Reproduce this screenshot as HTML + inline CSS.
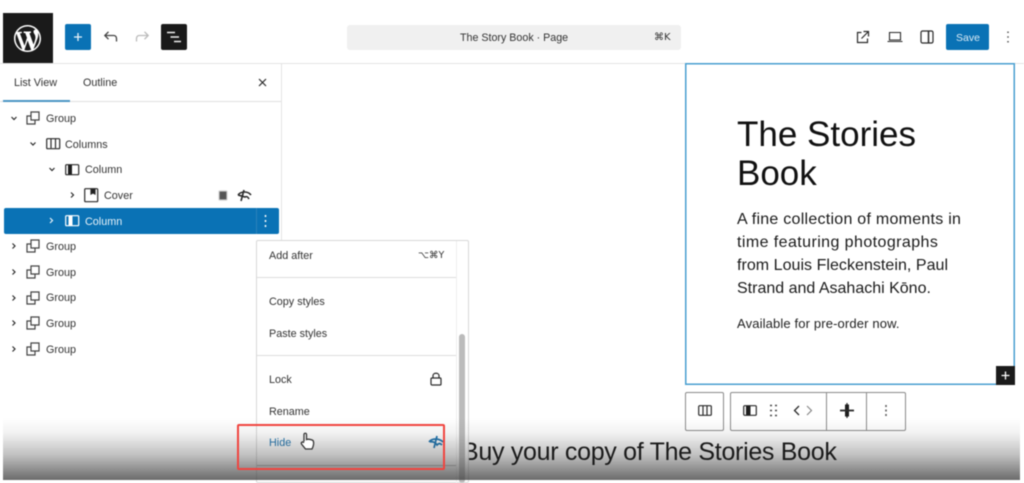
<!DOCTYPE html>
<html>
<head>
<meta charset="utf-8">
<style>
html,body{margin:0;padding:0;background:#fff}
#p{position:relative;width:1024px;height:483px;overflow:hidden;background:#fff;font-family:"Liberation Sans",sans-serif;color:#1e1e1e;filter:blur(.5px)}
.a{position:absolute}
.t{position:absolute;font-size:10.8px;line-height:14px;white-space:nowrap;color:#333;letter-spacing:0}
svg{position:absolute;overflow:visible;fill:none;stroke:#2a2a2a;stroke-width:1.2}
.h{position:absolute;font-size:35px;line-height:39px;color:#111;white-space:nowrap}
.b{position:absolute;font-size:16px;line-height:23px;color:#1a1a1a;white-space:nowrap}
</style>
</head>
<body>
<div id="p">
<!-- top bar -->
<div class="a" style="left:3px;top:13px;width:50px;height:50px;background:#1a1a1a"></div>
<svg style="left:13.500px;top:24.500px;fill:#fff;stroke:none" width="27" height="27" viewBox="0 0 20 20"><path d="M20 10c0-5.51-4.49-10-10-10C4.48 0 0 4.49 0 10c0 5.52 4.48 10 10 10 5.510 0 10-4.480 10-10zM7.780 15.370L4.370 6.220c.55-.02 1.170-.08 1.170-.08.5-.06.44-1.130-.06-1.110 0 0-1.450.11-2.370.11-.18 0-.37 0-.58-.01C4.120 2.690 6.870 1.070 10 1.070c2.330 0 4.450.87 6.030 2.340-.66-.110-1.600.380-1.600 1.540 0 .72.430 1.330.89 2.060.350.610.550 1.360.550 2.460 0 1.490-1.400 5-1.400 5l-3.030-8.370c.540-.020.820-.170.820-.170.500-.050.440-1.250-.060-1.220 0 0-1.440.120-2.380.120-.870 0-2.330-.120-2.330-.120-.500-.030-.560 1.200-.060 1.220l.920.080 1.260 3.410zM17.410 10c.240-.640.740-1.870.430-4.250.700 1.290 1.050 2.710 1.050 4.250 0 3.290-1.730 6.240-4.400 7.780.970-2.590 1.940-5.200 2.920-7.780zM6.100 18.090C3.120 16.650 1.110 13.530 1.110 10c0-1.300.230-2.480.720-3.590C3.250 10.300 4.670 14.200 6.100 18.090zm4.030-6.630l2.580 6.980c-.860.290-1.740.450-2.710.450-.790 0-1.570-.110-2.290-.330.810-2.380 1.620-4.740 2.420-7.100z"/></svg>
<div class="a" style="left:65px;top:24px;width:26px;height:26px;background:#0a72b5;border-radius:2px"></div>
<svg style="left:71px;top:30px" width="14" height="14"><path d="M7 3V11M3 7H11" stroke="#e8f2f9" stroke-width="1.300"/></svg>
<svg style="left:103px;top:30px" width="15" height="14"><path d="M13.500 11.500V8.500C13.500 6.800 12.300 5.500 10.800 5.500H2M5.500 1.800L1.800 5.500L5.500 9.200" stroke-width="1.300" stroke="#444"/></svg>
<svg style="left:135px;top:30px" width="15" height="14"><path d="M1.500 11.500V8.500C1.500 6.800 2.700 5.500 4.200 5.500H13M9.500 1.800L13.200 5.500L9.500 9.200" stroke="#bbb" stroke-width="1.300"/></svg>
<div class="a" style="left:161px;top:24px;width:26px;height:26px;background:#1a1a1a;border-radius:2px"></div>
<svg style="left:166px;top:31px" width="16" height="13"><path d="M1 1.500H9M4.500 6H13M8 10.500H15" stroke="#eee" stroke-width="1.400"/></svg>
<div class="a" style="left:347px;top:25px;width:334px;height:25px;background:#f0f0f0;border-radius:3px"></div>
<div class="t" style="left:460px;top:31px;font-size:10.700px">The Story Book · Page</div>
<div class="t" style="left:654px;top:31px;font-size:10px;font-family:'DejaVu Sans',sans-serif">⌘K</div>
<svg style="left:856px;top:30px" width="14" height="14"><path d="M5.500 2.500H1.500V12.500H11.500V8.500M7.500 1.500H12.500V6.500M12.500 1.500L5.500 8.500" stroke-width="1.200"/></svg>
<svg style="left:887px;top:31px" width="16" height="12"><path d="M2.500 1.500H13.500V9H2.500ZM0.500 10.500H15.500" stroke-width="1.100"/></svg>
<svg style="left:920px;top:30px" width="14" height="14"><rect x="1" y="1" width="12" height="12" rx="1.500" stroke-width="1.200"/><path d="M8.500 1V13" stroke-width="1.500"/></svg>
<div class="a" style="left:946px;top:24px;width:43px;height:26px;background:#0a72b5;border-radius:2px"></div>
<div class="t" style="left:956px;top:31px;color:#dcebf5;font-size:10.500px">Save</div>
<svg style="left:1006px;top:30px" width="4" height="14"><path d="M2 1.500V3M2 6.300V7.800M2 11V12.500" stroke-width="1.500" stroke="#555"/></svg>
<div class="a" style="left:0;top:63px;width:1024px;height:1px;background:#e4e4e4"></div>
<!-- sidebar -->
<div class="a" style="left:281px;top:63px;width:1px;height:357px;background:#e4e4e4"></div>
<div class="a" style="left:0;top:101px;width:281px;height:1px;background:#e0e0e0"></div>
<div class="a" style="left:3px;top:100px;width:67px;height:2px;background:#4b95c4"></div>
<div class="t" style="left:14px;top:76px">List View</div>
<div class="t" style="left:83px;top:76px">Outline</div>
<svg style="left:258px;top:78px" width="9" height="9"><path d="M1 1L8 8M8 1L1 8" stroke-width="1.200"/></svg>
<!-- tree -->
<svg style="left:0;top:0" width="281" height="360">
<path d="M11.500 117L14 119.500L16.500 117M30.500 142.500L33 145L35.500 142.500M49.500 168L52 170.500L54.500 168M71 192.500L73.500 195L71 197.500"/>
<path d="M12.500 243.500L15 246L12.500 248.500M12.500 269.500L15 272L12.500 274.500M12.500 295.500L15 298L12.500 300.500M12.500 320.500L15 323L12.500 325.500M12.500 346.500L15 349L12.500 351.500"/>
<path d="M31 116H27V124H35V120M31 112H39V120H31Z" stroke="#444"/>
<path d="M31 244H27V252H35V248M31 240H39V248H31Z" stroke="#444"/>
<path d="M31 270H27V278H35V274M31 266H39V274H31Z" stroke="#444"/>
<path d="M31 296H27V304H35V300M31 292H39V300H31Z" stroke="#444"/>
<path d="M31 321H27V329H35V325M31 317H39V325H31Z" stroke="#444"/>
<path d="M31 347H27V355H35V351M31 343H39V351H31Z" stroke="#444"/>
<rect x="46.700" y="138.700" width="13" height="10" rx="1"/><path d="M51 139V148M55.500 139V148"/>
<rect x="65.700" y="164.700" width="13" height="10" rx="1"/><rect x="68" y="165" width="4" height="9.500" fill="#1e1e1e" stroke="none"/>
<rect x="84.700" y="188.700" width="13" height="13" rx="1"/><path d="M91 189V194L93 193L95 194V189Z" fill="#1e1e1e"/>
<rect x="219" y="191" width="8" height="9" rx="1" fill="#555" stroke="#ccc"/>
<path d="M238 195C241 191 248 191 251 195M244 190L241 201M238 195L245 197C247 196 248 197 249 199" stroke-width="1.600"/>
</svg>
<div class="t" style="left:46px;top:112px">Group</div>
<div class="t" style="left:65px;top:138px">Columns</div>
<div class="t" style="left:85px;top:163px">Column</div>
<div class="t" style="left:104px;top:189px">Cover</div>
<div class="a" style="left:4px;top:208px;width:275px;height:26px;background:#0a72b5;border-radius:2px"></div>
<div class="a" style="left:256px;top:208px;width:1px;height:26px;background:#2a82bb"></div>
<svg style="left:0;top:0" width="281" height="240"><path d="M50 218L52.500 220.500L50 223" stroke="#e8f2f9"/><rect x="65.700" y="215.700" width="13" height="10" rx="1" stroke="#fff"/><rect x="68.500" y="216" width="4" height="9.500" fill="#fff" stroke="none"/><path d="M265.500 215V217M265.500 220V222M265.500 225V227" stroke="#fff" stroke-width="1.500"/></svg>
<div class="t" style="left:85px;top:215px;color:#e8f2f9">Column</div>
<div class="t" style="left:46px;top:240px">Group</div>
<div class="t" style="left:46px;top:266px">Group</div>
<div class="t" style="left:46px;top:291px">Group</div>
<div class="t" style="left:46px;top:317px">Group</div>
<div class="t" style="left:46px;top:343px">Group</div>
<!-- canvas block -->
<svg style="left:0;top:0" width="1024" height="483"><rect x="685.750" y="63.750" width="328.500" height="320.500" stroke="#4a9fd0" stroke-width="1.500"/></svg>
<div class="h" style="left:737px;top:115px">The Stories</div>
<div class="h" style="left:737px;top:154px">Book</div>
<div class="b" style="left:737px;top:208px;letter-spacing:.26px">A fine collection of moments in</div>
<div class="b" style="left:737px;top:231px;letter-spacing:.42px">time featuring photographs</div>
<div class="b" style="left:737px;top:254px;letter-spacing:.04px">from Louis Fleckenstein, Paul</div>
<div class="b" style="left:737px;top:277px">Strand and Asahachi Kōno.</div>
<div class="t" style="left:737px;top:315px;font-size:13px;line-height:17px;color:#222;letter-spacing:.14px">Available for pre-order now.</div>
<div class="a" style="left:996px;top:366px;width:19px;height:19px;background:#1a1a1a"></div>
<svg style="left:999px;top:369px" width="13" height="13"><path d="M6.500 2.500V10.500M2.500 6.500H10.500" stroke="#fff" stroke-width="1.300"/></svg>
<!-- block toolbar -->
<div class="a" style="left:685px;top:392px;width:37px;height:37px;border:1px solid #8a8a8a;border-radius:2px;background:#fff"></div>
<svg style="left:698px;top:405px" width="14" height="11"><rect x=".7" y=".7" width="12.600" height="9.600" rx="1"/><path d="M5 1V10M9 1V10"/></svg>
<div class="a" style="left:730px;top:392px;width:174px;height:37px;border:1px solid #8a8a8a;border-radius:2px;background:#fff"></div>
<div class="a" style="left:826px;top:392px;width:1px;height:38px;background:#8a8a8a"></div>
<div class="a" style="left:866px;top:392px;width:1px;height:38px;background:#8a8a8a"></div>
<svg style="left:743px;top:405px" width="14" height="11"><rect x=".7" y=".7" width="12.600" height="9.600" rx="1"/><rect x="3" y="1" width="4.500" height="9" fill="#1e1e1e" stroke="none"/></svg>
<svg style="left:769px;top:404px" width="9" height="13"><path d="M1 1.500H3M6 1.500H8M1 6.500H3M6 6.500H8M1 11.500H3M6 11.500H8" stroke-width="1.500" stroke="#444"/></svg>
<svg style="left:793px;top:405px" width="20" height="11"><path d="M6 1L1.500 5.500L6 10" stroke-width="1.300"/><path d="M14 1L18.500 5.500L14 10" stroke="#888" stroke-width="1.200"/></svg>
<svg style="left:840px;top:403px" width="14" height="15"><path d="M7 0V15" stroke-width="1.300"/><rect x="5" y="1.500" width="4" height="12" fill="#1e1e1e" stroke="none"/><path d="M0 7.500H14" stroke-width="1.800"/></svg>
<svg style="left:884px;top:404px" width="4" height="13"><path d="M2 1V3M2 5.500V7.500M2 10V12" stroke-width="1.500" stroke="#555"/></svg>
<!-- menu -->
<div class="a" style="left:256px;top:240px;width:213px;height:243px;background:#fff;border:1px solid #d8d8d8;border-radius:2px;box-sizing:border-box"></div>
<div class="a" style="left:456px;top:241px;width:1px;height:242px;background:#eee"></div>
<div class="a" style="left:459px;top:334px;width:6px;height:149px;background:#bbb;border-radius:3px"></div>
<div class="a" style="left:257px;top:277px;width:199px;height:1px;background:#ddd"></div>
<div class="a" style="left:257px;top:355px;width:199px;height:1px;background:#ddd"></div>
<div class="a" style="left:257px;top:465px;width:199px;height:1px;background:#bbb"></div>
<div class="t" style="left:269px;top:249px">Add after</div>
<div class="t" style="left:418px;top:249px;font-size:9.500px;font-family:'DejaVu Sans',sans-serif">⌥⌘Y</div>
<div class="t" style="left:269px;top:295px">Copy styles</div>
<div class="t" style="left:269px;top:327px">Paste styles</div>
<div class="t" style="left:269px;top:373px">Lock</div>
<svg style="left:430px;top:372px" width="12" height="14"><rect x="1" y="6" width="10" height="7" rx="1"/><path d="M3 6V3.500C3 .5 9 .5 9 3.500V6"/></svg>
<div class="t" style="left:269px;top:405px">Rename</div>
<div class="t" style="left:269px;top:436px;color:#1670ae">Hide</div>
<svg style="left:428px;top:435px" width="16" height="14"><path d="M1 7C4 3 11 3 15 7M9 1L6 13M2 7C5 6 8 8 9 10C11 8 12 8 14 10" stroke="#1670ae" stroke-width="1.700"/></svg>
<!-- bottom gradient -->
<div class="a" style="left:3px;top:418px;width:1017px;height:62px;background:linear-gradient(to bottom,rgba(80,80,80,0) 0%,rgba(80,80,80,.08) 25%,rgba(80,80,80,.36) 60%,rgba(70,70,70,.8) 100%)"></div>
<!-- heading, clipped by menu edge -->
<div class="a" style="left:462px;top:436px;font-size:25px;line-height:32px;color:#1a1a1a;white-space:nowrap;letter-spacing:-.3px;clip-path:inset(-5px -5px -5px 7px)">Buy your copy of The Stories Book</div>
<!-- red box -->
<div class="a" style="left:237px;top:424px;width:204px;height:42px;border:2px solid #f0443f;border-radius:2px"></div>
<!-- cursor -->
<svg style="left:300px;top:432px" width="15" height="19"><path d="M4 9.500V2.500C4 .8 6.500 .8 6.500 2.500V7.500C8 6.800 12.500 7.500 13.300 9C14 11 13.500 14 12 17H5.500L1.500 12C.8 10.500 2.500 9 4 10.800" fill="#fff" stroke="#333" stroke-width="1.300"/></svg>
</div>
</body>
</html>
